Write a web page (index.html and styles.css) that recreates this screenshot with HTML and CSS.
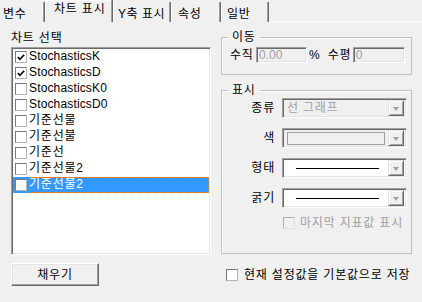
FILE: index.html
```html
<!DOCTYPE html>
<html lang="ko">
<head>
<meta charset="utf-8">
<link rel="stylesheet" href="styles.css">
</head>
<body>
<div class="tabs">
  <div class="tab tab-var">변수</div>
  <div class="tab tab-chart is-active">차트 표시</div>
  <div class="tab tab-y">Y축 표시</div>
  <div class="tab tab-prop">속성</div>
  <div class="tab tab-gen">일반</div>
</div>
<div class="page">
  <div class="left">
    <div class="caption">차트 선택</div>
    <div class="list">
      <div class="item"><span class="cb"><svg viewBox="0 0 11 11" width="11" height="11"><path d="M2 5 L4.3 7.5 L9 2.5" fill="none" stroke="#000" stroke-width="1.8"/></svg></span><span class="txt">StochasticsK</span></div>
      <div class="item"><span class="cb"><svg viewBox="0 0 11 11" width="11" height="11"><path d="M2 5 L4.3 7.5 L9 2.5" fill="none" stroke="#000" stroke-width="1.8"/></svg></span><span class="txt">StochasticsD</span></div>
      <div class="item"><span class="cb"></span><span class="txt">StochasticsK0</span></div>
      <div class="item"><span class="cb"></span><span class="txt">StochasticsD0</span></div>
      <div class="item"><span class="cb"></span><span class="txt ko">기준선물</span></div>
      <div class="item"><span class="cb"></span><span class="txt ko">기준선불</span></div>
      <div class="item"><span class="cb"></span><span class="txt ko">기준선</span></div>
      <div class="item"><span class="cb"></span><span class="txt ko">기준선물2</span></div>
      <div class="item is-selected"><span class="cb"></span><span class="txt ko">기준선불2</span></div>
    </div>
    <button class="btn">채우기</button>
  </div>
  <div class="right">
    <fieldset class="group group-move">
      <legend>이동</legend>
      <div class="move-row">
        <span class="mlbl">수직</span>
        <span class="edit edit-v">0.00</span>
        <span class="pct">%</span>
        <span class="mlbl mlbl-h">수평</span>
        <span class="edit edit-h">0</span>
      </div>
    </fieldset>
    <fieldset class="group group-show">
      <legend>표시</legend>
      <div class="form">
        <span class="lbl">종류</span>
        <div class="combo is-disabled"><span class="val">선 그래프</span><span class="drop"><span class="tri"></span></span></div>
        <span class="lbl">색</span>
        <div class="combo is-disabled"><span class="swatch"></span><span class="drop"><span class="tri"></span></span></div>
        <span class="lbl">형태</span>
        <div class="combo"><span class="line"></span><span class="drop"><span class="tri"></span></span></div>
        <span class="lbl">굵기</span>
        <div class="combo"><span class="line"></span><span class="drop"><span class="tri"></span></span></div>
        <span></span>
        <div class="last"><span class="cb cb-dis"></span><span class="dis-text">마지막 지표값 표시</span></div>
      </div>
    </fieldset>
    <div class="save"><span class="cb"></span><span class="save-text">현재 설정값을 기본값으로 저장</span></div>
  </div>
</div>
</body>
</html>
```

FILE: styles.css
```css
* { box-sizing: border-box; }
html, body { margin: 0; padding: 0; }
body {
  width: 422px;
  height: 302px;
  overflow: hidden;
  background: #f0f0f0;
  color: #000;
  font-family: "Liberation Sans", "Noto Sans CJK KR", sans-serif;
  font-size: 12px;
  line-height: 14px;
}

/* Hangul runs are set a little wider, like the bitmap UI font */
.tab, .caption, .ko, .btn, .group legend, .mlbl, .lbl, .val, .dis-text, .save-text {
  letter-spacing: 0.8px;
}

/* tabs */
.tabs {
  display: flex;
  align-items: flex-end;
  height: 22px;
  box-shadow: inset 0 -1px 0 #fff;
}
.tab {
  height: 20px;
  padding-top: 5px;
  border-right: 1px solid #696969;
  box-shadow: inset -1px 0 0 #a0a0a0, inset 1px 0 0 #fff;
  background: #f0f0f0;
  white-space: nowrap;
}
.tab-var { width: 45px; padding-left: 3px; box-shadow: inset -1px 0 0 #a0a0a0; }
.tab-chart { width: 68px; padding-left: 9px; }
.tab-y { width: 58px; padding-left: 5px; letter-spacing: 0.5px; }
.tab-prop { width: 50px; padding-left: 7px; }
.tab-gen { width: 48px; padding-left: 6px; }
.tab.is-active {
  height: 22px;
  padding-top: 2px;
  box-shadow: inset -1px 0 0 #a0a0a0, inset 1px 0 0 #fff, inset 0 1px 0 #fff;
}

/* page */
.page {
  display: flex;
  padding-left: 11px;
  gap: 10px;
}
.left { width: 200px; display: flex; flex-direction: column; align-items: flex-start; }
.right { width: 191px; display: flex; flex-direction: column; }

.caption { margin-top: 9px; height: 16px; }

.list {
  width: 200px;
  height: 208px;
  background: #fff;
  border-style: solid;
  border-width: 1px;
  border-color: #a0a0a0 #fff #fff #a0a0a0;
  box-shadow: inset 1px 1px 0 #696969, inset -1px -1px 0 #e3e3e3;
  padding: 1px 1px 0 1px;
}
.item {
  display: flex;
  align-items: center;
  height: 16px;
}
.cb {
  width: 12px;
  height: 12px;
  flex: none;
  margin-left: 2px;
  background: #fff;
  border: 1px solid #7a7a7a;
  border-right-color: #b5b5b5;
  border-bottom-color: #b5b5b5;
  display: flex;
  align-items: center;
  justify-content: center;
}
.cb svg { display: block; }
.txt {
  margin-left: 1px;
  padding-left: 1px;
  height: 16px;
  line-height: 15px;
  flex: 1;
  letter-spacing: 0.15px;
}
.txt.ko { letter-spacing: 0.8px; }
.item.is-selected { background: #3399ff; }
.item.is-selected .txt {
  color: #fff;
  outline: 1px dotted #e8832a;
  outline-offset: -1px;
  margin-left: 2px;
  padding-left: 0;
}

.btn {
  margin-top: 8px;
  width: 88px;
  height: 23px;
  padding: 0;
  font: inherit;
  color: #000;
  background: #f0f0f0;
  border-style: solid;
  border-width: 1px;
  border-color: #fff #696969 #696969 #fff;
  box-shadow: inset -1px -1px 0 #a0a0a0, inset 1px 1px 0 #e3e3e3;
}

/* group boxes */
.group {
  margin: 0;
  padding: 0;
  border: 1px solid #c0c0c0;
  box-shadow: inset 1px 1px 0 #fff;
  min-width: 0;
}
.group legend {
  margin-left: 6px;
  padding: 0 4px;
  line-height: 14px;
}
.group-move { margin-top: 8px; height: 45px; }
.move-row {
  display: flex;
  align-items: center;
  height: 16px;
  margin-top: 3px;
  padding-left: 8px;
}
.mlbl { width: 26px; white-space: nowrap; }
.mlbl-h { width: 25px; margin-left: 8px; }
.edit {
  height: 16px;
  line-height: 14px;
  padding-left: 2px;
  color: #a0a0a0;
  background: #f0f0f0;
  border-style: solid;
  border-width: 1px;
  border-color: #a0a0a0 #fff #fff #a0a0a0;
  box-shadow: inset 1px 1px 0 #696969, inset -1px -1px 0 #e3e3e3;
}
.edit-v { width: 51px; }
.edit-h { width: 52px; }
.pct { margin-left: 2px; }

.group-show { margin-top: 8px; height: 171px; }
.form {
  display: grid;
  grid-template-columns: 53px 125px;
  column-gap: 7px;
  row-gap: 10px;
  align-items: center;
  margin-top: 1px;
}
.lbl { text-align: right; }
.combo {
  height: 20px;
  display: flex;
  align-items: center;
  background: #fff;
  border-style: solid;
  border-width: 1px;
  border-color: #a0a0a0 #fff #fff #a0a0a0;
  box-shadow: inset 1px 1px 0 #696969, inset -1px -1px 0 #e3e3e3;
  padding: 2px;
}
.combo.is-disabled { background: #f0f0f0; }
.val { flex: 1; color: #a0a0a0; padding-left: 2px; }
.swatch {
  flex: 1;
  height: 13px;
  margin: 0 3px 0 2px;
  border: 1px solid #a0a0a0;
  background: #f0f0f0;
}
.line {
  flex: 1;
  height: 0;
  border-top: 1px solid #000;
  margin: 0 9px 0 11px;
}
.drop {
  width: 16px;
  height: 16px;
  flex: none;
  margin-left: auto;
  background: #f0f0f0;
  border-style: solid;
  border-width: 1px;
  border-color: #e3e3e3 #696969 #696969 #e3e3e3;
  box-shadow: inset 1px 1px 0 #fff, inset -1px -1px 0 #a0a0a0;
  display: flex;
  align-items: center;
  justify-content: center;
}
.tri {
  width: 0;
  height: 0;
  border-left: 3.5px solid transparent;
  border-right: 3.5px solid transparent;
  border-top: 4px solid #a0a0a0;
  margin-top: 1px;
}
.last {
  display: flex;
  align-items: center;
  height: 16px;
  margin-top: -3px;
}
.last .cb { margin-left: 1px; }
.cb-dis { background: #f0f0f0; border-color: #b0b0b0 #e0e0e0 #e0e0e0 #b0b0b0; }
.dis-text { color: #a0a0a0; margin-left: 5px; white-space: nowrap; }

.save {
  display: flex;
  align-items: center;
  height: 16px;
  margin-top: 13px;
}
.save .cb { margin-left: 5px; margin-right: 6px; }
.save-text { white-space: nowrap; }
```
